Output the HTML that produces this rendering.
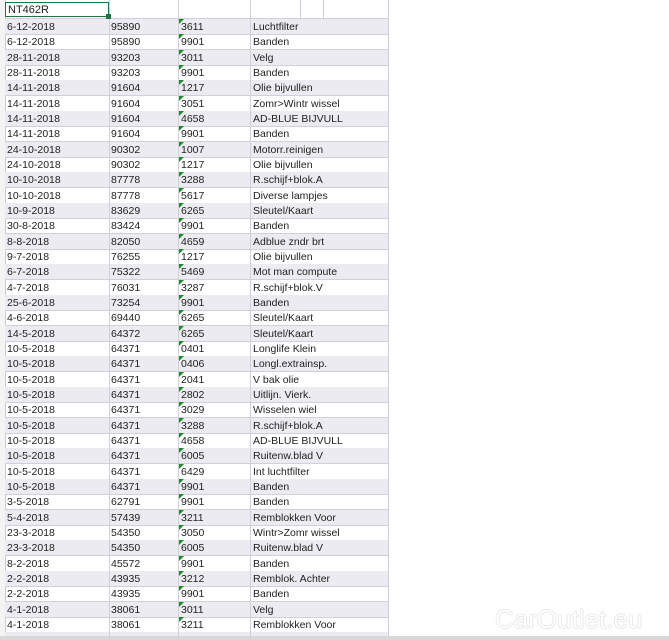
<!DOCTYPE html><html style="overflow:hidden;height:640px"><head><style>
body{margin:0;width:669px;height:640px;background:#fff;position:relative;overflow:hidden;font-family:"Liberation Sans",sans-serif;font-size:10.5px;color:#222}
.r{position:absolute;left:5px;width:383px;height:15px;border-bottom:1px solid #d0d0dc}
.g{background:#ebebf1}
.r span{position:absolute;top:2px}
.a{left:2px}.b{left:106px}.c{left:176px}.d{left:248px}
.c:before{content:"";position:absolute;left:-2px;top:-2px;border-left:5px solid #1d8a2a;border-bottom:5px solid transparent}
.v{position:absolute;top:0;width:1px;height:636px;background:#d0d0dc}
.h{position:absolute;left:0;top:0;width:5px;height:636px;background:#f4f4f4;border-right:1px solid #ccc}
#sel{position:absolute;left:5px;top:2px;width:104px;height:15px;border:1.5px solid #217346;box-sizing:border-box;font-size:11px;padding:1px 2px;background:#fff}
#wm{position:absolute;left:495px;top:604px;font-size:26px;color:#fff;text-shadow:0 0 1px #bbb,0 0 1px #bbb}
</style></head><body>
<div class="h"></div>
<div id="rows"></div>
<div class="v" style="left:109px"></div>
<div class="v" style="left:178px"></div>
<div class="v" style="left:250px"></div>
<div class="v" style="left:388px"></div>
<div class="v" style="left:300px;height:18px"></div>
<div class="v" style="left:323px;height:18px"></div>
<div style="position:absolute;left:5px;top:18px;width:383px;height:1px;background:#d0d0dc"></div>
<div id="sel">NT462R</div>
<div style="position:absolute;left:106px;top:14px;width:5px;height:5px;background:#217346"></div>
<div id="wm">CarOutlet.eu</div>
<div style="position:absolute;left:0;top:636px;width:669px;height:4px;background:#d8d8d8"></div>
<script>
var d=`6-12-2018|95890|3611|Luchtfilter
6-12-2018|95890|9901|Banden
28-11-2018|93203|3011|Velg
28-11-2018|93203|9901|Banden
14-11-2018|91604|1217|Olie bijvullen
14-11-2018|91604|3051|Zomr>Wintr wissel
14-11-2018|91604|4658|AD-BLUE BIJVULL
14-11-2018|91604|9901|Banden
24-10-2018|90302|1007|Motorr.reinigen
24-10-2018|90302|1217|Olie bijvullen
10-10-2018|87778|3288|R.schijf+blok.A
10-10-2018|87778|5617|Diverse lampjes
10-9-2018|83629|6265|Sleutel/Kaart
30-8-2018|83424|9901|Banden
8-8-2018|82050|4659|Adblue zndr brt
9-7-2018|76255|1217|Olie bijvullen
6-7-2018|75322|5469|Mot man compute
4-7-2018|76031|3287|R.schijf+blok.V
25-6-2018|73254|9901|Banden
4-6-2018|69440|6265|Sleutel/Kaart
14-5-2018|64372|6265|Sleutel/Kaart
10-5-2018|64371|0401|Longlife Klein
10-5-2018|64371|0406|Longl.extrainsp.
10-5-2018|64371|2041|V bak olie
10-5-2018|64371|2802|Uitlijn. Vierk.
10-5-2018|64371|3029|Wisselen wiel
10-5-2018|64371|3288|R.schijf+blok.A
10-5-2018|64371|4658|AD-BLUE BIJVULL
10-5-2018|64371|6005|Ruitenw.blad V
10-5-2018|64371|6429|Int luchtfilter
10-5-2018|64371|9901|Banden
3-5-2018|62791|9901|Banden
5-4-2018|57439|3211|Remblokken Voor
23-3-2018|54350|3050|Wintr>Zomr wissel
23-3-2018|54350|6005|Ruitenw.blad V
8-2-2018|45572|9901|Banden
2-2-2018|43935|3212|Remblok. Achter
2-2-2018|43935|9901|Banden
4-1-2018|38061|3011|Velg
4-1-2018|38061|3211|Remblokken Voor`.split("\n"),h="";
d.forEach(function(l,i){var c=l.split("|");h+='<div class="r'+(i%2?'':' g')+'" style="top:'+(19+i*15.33).toFixed(1)+'px"><span class="a">'+c[0]+'</span><span class="b">'+c[1]+'</span><span class="c">'+c[2]+'</span><span class="d">'+c[3]+'</span></div>'});
h+='<div class="r g" style="top:632.2px;height:4px;overflow:hidden"></div>';
document.getElementById("rows").innerHTML=h;
</script>
</body></html>
